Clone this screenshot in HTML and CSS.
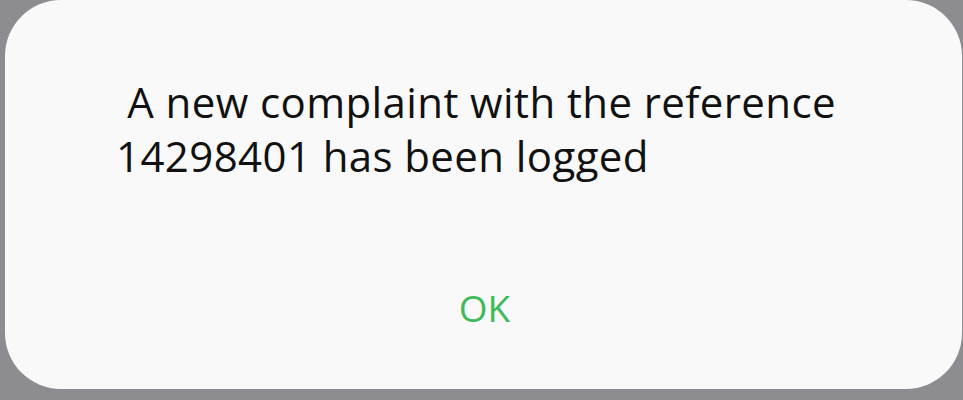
FILE: index.html
```html
<!DOCTYPE html>
<html lang="en">
<head>
<meta charset="utf-8">
<link rel="stylesheet" href="styles.css">
</head>
<body>
<div class="screen">
  <div class="dialog">
    <p class="message">&nbsp;A new complaint with the reference<br>14298401 has been logged</p>
    <div class="actions"><button class="ok">OK</button></div>
  </div>
</div>
</body>
</html>
```
FILE: styles.css
```css
html, body {
  margin: 0;
  padding: 0;
}
body {
  background: #8d8c91;
  width: 963px;
  height: 400px;
  overflow: hidden;
  font-family: "Open Sans", "Noto Sans", sans-serif;
}
.screen {
  padding: 0 1px 0 5px;
  height: 389px;
}
.dialog {
  background: #f9f9f9;
  height: 389px;
  border-radius: 56px;
  display: flex;
  flex-direction: column;
}
.message {
  margin: 0;
  padding: 75px 0 0 111px;
  font-size: 42px;
  line-height: 54px;
  letter-spacing: 0.4px;
  color: #111;
}
.actions {
  display: flex;
  justify-content: center;
  margin-top: 99px;
}
.ok {
  background: none;
  border: 0;
  padding: 0;
  font-family: inherit;
  font-size: 37px;
  color: #3dba5a;
  margin-left: 2px;
}
```
